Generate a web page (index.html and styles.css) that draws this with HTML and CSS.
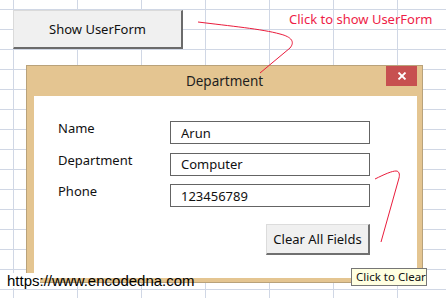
FILE: index.html
```html
<!DOCTYPE html>
<html lang="en">
<head>
    <meta charset="UTF-8">
    <meta name="viewport" content="width=device-width, initial-scale=1.0">
    <title>Show UserForm</title>
    <link rel="stylesheet" href="styles.css">
</head>
<body>

    <div class="sheet">
        <div class="top-row">
            <button type="button" class="show-btn">Show UserForm</button>
            <span class="hint">Click to show UserForm</span>
        </div>

        <div class="dialog">
            <div class="titlebar">
                <span class="title">Department</span>
                <span class="close">
                    <svg width="10" height="8" viewBox="0 0 10 8">
                        <path d="M1.5 0.5 L8.5 7.5 M8.5 0.5 L1.5 7.5" stroke="#fff" stroke-width="1.8" fill="none"/>
                    </svg>
                </span>
            </div>
            <div class="client">
                <form class="fields">
                    <label for="name">Name</label>
                    <input type="text" id="name" value="Arun">

                    <label for="dept">Department</label>
                    <input type="text" id="dept" value="Computer">

                    <label for="phone">Phone</label>
                    <input type="text" id="phone" value="123456789">

                    <button type="button" class="clear-btn">Clear All Fields</button>
                </form>
            </div>
        </div>
    </div>

    <!-- flechas rojas -->
    <svg class="arrows" width="446" height="298" viewBox="0 0 446 298">
        <path d="M198 22 C230 26 262 29 280 34 C292 37 295 42 290 48 L260 73" stroke="#ea1c3c" stroke-width="1" fill="none"/>
        <path d="M375 179 C385 174 392 171 396 171 C399 171 400 174 399 178 L381 242" stroke="#ea1c3c" stroke-width="1" fill="none"/>
    </svg>

    <div class="tooltip">Click to Clear</div>
    <div class="watermark">https://www.encodedna.com</div>

</body>
</html>
```

FILE: styles.css
```css
body {
    margin: 0;
    width: 446px;
    height: 298px;
    overflow: hidden;
    position: relative;
    font-family: "Noto Sans", sans-serif;
    font-size: 13px;
    color: #111;
    background-color: #fff;
    background-image:
        linear-gradient(to right, #d0d7e5 1px, transparent 1px),
        linear-gradient(to bottom, #d0d7e5 1px, transparent 1px);
    background-size: 64px 100%, 100% 20px;
    background-position: 13px 0, 0 9px;
}

.top-row {
    display: flex;
    padding: 10px 0 0 13px;
}

.show-btn {
    width: 170px;
    height: 39px;
    background: #f0f0f0;
    border: 1px solid #dadada;
    border-right: 2px solid #6b6b6b;
    border-bottom: 2px solid #6b6b6b;
    font-family: "Noto Sans", sans-serif;
    font-size: 13px;
    color: #111;
    padding: 0;
}

.hint {
    margin-left: 106px;
    line-height: 18px;
    color: #ee1d47;
}

.dialog {
    margin: 16px 0 0 26px;
    width: 397px;
    height: 218px;
    box-sizing: border-box;
    background: #e4c591;
    border: 1px solid #b9a27a;
    display: flex;
    flex-direction: column;
}

.titlebar {
    height: 30px;
    display: grid;
    grid-template-columns: 36px 1fr 36px;
}

.title {
    grid-column: 2;
    text-align: center;
    font-size: 13.5px;
    line-height: 30px;
    color: #1e1e1e;
}

.close {
    width: 31px;
    height: 20px;
    background: #c75050;
    display: flex;
    align-items: center;
    justify-content: center;
}

.client {
    flex: 1;
    margin: 0 5px 4px 7px;
    background: #fff;
}

.fields {
    display: grid;
    grid-template-columns: 112px 200px;
    grid-auto-rows: 23px;
    row-gap: 8.5px;
    padding: 25px 0 0 24px;
}

.fields label {
    line-height: 14px;
    align-self: start;
}

.fields input {
    box-sizing: border-box;
    height: 23px;
    width: 200px;
    margin: 0;
    border: 1px solid #646464;
    padding: 0 10px;
    font-family: "Noto Sans", sans-serif;
    font-size: 13px;
    color: #111;
    outline: none;
}

.clear-btn {
    grid-column: 2;
    justify-self: end;
    width: 104px;
    height: 31px;
    margin-top: 8.5px;
    background: #f0f0f0;
    border: 1px solid #dcdcdc;
    border-right: 2px solid #707070;
    border-bottom: 2px solid #707070;
    font-family: "Noto Sans", sans-serif;
    font-size: 13px;
    color: #111;
    padding: 0;
}

.arrows {
    position: absolute;
    left: 0;
    top: 0;
    pointer-events: none;
}

.tooltip {
    position: absolute;
    left: 351px;
    top: 268px;
    width: 76px;
    height: 18px;
    box-sizing: border-box;
    background: #ffffe1;
    border: 1px solid #767676;
    font-size: 11.5px;
    line-height: 16px;
    padding-left: 4px;
    white-space: nowrap;
    color: #111;
}

.watermark {
    position: absolute;
    left: 7px;
    top: 273px;
    font-family: "Liberation Sans", Arial, sans-serif;
    font-size: 15px;
    line-height: 15px;
    color: #000;
    background: linear-gradient(to right, #fff 33px, transparent 33px);
}
```
